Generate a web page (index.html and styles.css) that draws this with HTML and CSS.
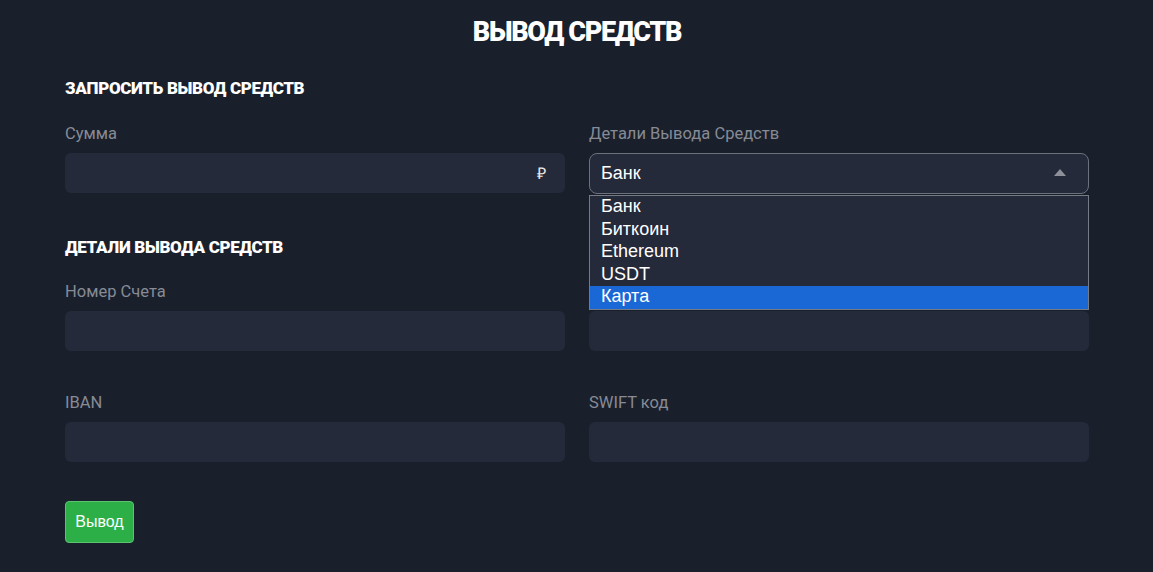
FILE: index.html
```html
<!DOCTYPE html>
<html lang="ru">
<head>
<meta charset="utf-8">
<title>Вывод средств</title>
<link rel="stylesheet" href="styles.css">
</head>
<body>
<main class="page">
  <h1 class="title">ВЫВОД СРЕДСТВ</h1>

  <h2 class="section-title first">ЗАПРОСИТЬ ВЫВОД СРЕДСТВ</h2>
  <div class="grid">
    <div class="field">
      <label class="label">Сумма</label>
      <div class="input has-suffix"><span class="suffix">₽</span></div>
    </div>
    <div class="field">
      <label class="label">Детали Вывода Средств</label>
      <div class="select-wrap">
        <div class="select">
          <span class="select-value">Банк</span>
          <svg class="caret" width="12" height="7" viewBox="0 0 12 7"><path d="M0 7 L6 0 L12 7 Z" fill="#8d9098"/></svg>
        </div>
        <ul class="options">
          <li>Банк</li>
          <li>Биткоин</li>
          <li>Ethereum</li>
          <li>USDT</li>
          <li class="active">Карта</li>
        </ul>
      </div>
    </div>
  </div>

  <h2 class="section-title second">ДЕТАЛИ ВЫВОДА СРЕДСТВ</h2>
  <div class="grid">
    <div class="field">
      <label class="label">Номер Счета</label>
      <div class="input"></div>
    </div>
    <div class="field">
      <label class="label">&nbsp;</label>
      <div class="input"></div>
    </div>
  </div>
  <div class="grid row-gap">
    <div class="field">
      <label class="label">IBAN</label>
      <div class="input"></div>
    </div>
    <div class="field">
      <label class="label">SWIFT код</label>
      <div class="input"></div>
    </div>
  </div>

  <button class="btn">Вывод</button>
</main>
</body>
</html>
```

FILE: styles.css
```css
* { box-sizing: border-box; }
html, body { margin: 0; padding: 0; }
body {
  background: #1a1f2c;
  font-family: Roboto, "Liberation Sans", sans-serif;
  color: #fff;
  height: 572px;
  overflow: hidden;
}
.page {
  width: 1024px;
  margin: 0 0 0 65px;
}
.title {
  margin: 0;
  padding-top: 14px;
  font-size: 27px;
  line-height: 36px;
  font-weight: 900;
  text-align: center;
  letter-spacing: -1.3px;
  color: #fff;
}
.section-title {
  margin: 0;
  font-size: 17px;
  line-height: 20px;
  font-weight: 900;
  letter-spacing: -0.35px;
  color: #fff;
}
.section-title.first { margin-top: 28px; }
.section-title.second { margin-top: 43px; }
.grid {
  display: grid;
  grid-template-columns: 500px 500px;
  column-gap: 24px;
  margin-top: 26px;
}
.section-title.second + .grid { margin-top: 25px; }
.grid.row-gap { margin-top: 42px; }
.field { display: flex; flex-direction: column; }
.label {
  font-size: 16.5px;
  line-height: 20px;
  color: #868b95;
  margin-bottom: 9px;
}
.input {
  height: 40px;
  background: #252a3a;
  border-radius: 6px;
  display: flex;
  align-items: center;
  justify-content: flex-end;
  padding-right: 19px;
}
.suffix {
  font-family: "Liberation Sans", sans-serif;
  font-size: 16px;
  color: #e8e8e8;
}
.select-wrap { position: relative; }
.select {
  height: 41px;
  background: #252a3a;
  border: 1px solid #6d717c;
  border-radius: 8px;
  display: flex;
  align-items: center;
  justify-content: space-between;
  padding: 0 22px 0 11px;
}
.select-value {
  font-family: "Liberation Sans", Arial, sans-serif;
  font-size: 18px;
  color: #fff;
}
.caret { display: block; margin-top: -2px; }
.options {
  position: absolute;
  left: 0;
  right: 0;
  top: 42px;
  margin: 0;
  padding: 0;
  list-style: none;
  background: #252a3a;
  border: 1px solid #767a84;
  z-index: 5;
}
.options li {
  font-family: "Liberation Sans", Arial, sans-serif;
  font-size: 18px;
  line-height: 20.5px;
  padding: 0 0 2px 11px;
  color: #fff;
}
.options li.active { background: #1a67d6; }
.btn {
  margin-top: 39px;
  height: 42px;
  width: 69px;
  padding: 0;
  background: #2caf47;
  border: 1px solid #5cc26f;
  border-radius: 4px;
  color: #fff;
  font-family: "Liberation Sans", Arial, sans-serif;
  font-size: 16px;
  display: block;
}
```
